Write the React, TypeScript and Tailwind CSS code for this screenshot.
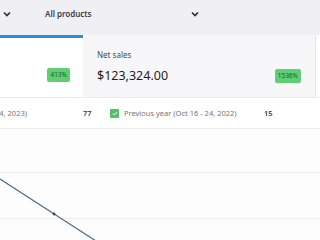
import React from 'react';

const Chevron: React.FC<{ className?: string }> = ({ className }) => (
  <svg className={className} width="8" height="6" viewBox="0 0 8 6" fill="none">
    <path d="M1 1.5l3 3 3-3" stroke="#2c2c33" strokeWidth="1.6" />
  </svg>
);

const Badge: React.FC<{ value: string }> = ({ value }) => (
  <span className="inline-flex h-[14px] items-center rounded-[2px] bg-[#5ecf73] px-[3px] text-[6.5px] leading-none text-[#1e5a2a]">
    {value}
  </span>
);

export default function App() {
  return (
    <div className="h-[240px] w-[320px] overflow-hidden bg-[#fdfdfd] font-['Noto_Sans',sans-serif] text-[#1e1e1e]">
      {/* filter bar */}
      <div className="flex h-[35px] items-start bg-[#f0eff3] pt-[8px]">
        <Chevron className="ml-[3px] mt-[3px]" />
        <span className="ml-[34px] text-[8px] leading-[11px] font-semibold text-[#3c3c44]">All products</span>
        <Chevron className="ml-[99px] mt-[3px]" />
      </div>

      {/* summary tiles */}
      <div className="flex h-[63px] border-b border-[#ececee]">
        <div className="relative flex w-[83px] flex-col items-end border-t-[3px] border-[#2c8fcf] bg-white pr-[13px] pt-[30px]">
          <Badge value="413%" />
        </div>
        <div className="flex w-[233px] flex-col border-r border-[#e4e4e7] bg-[#f7f7fa] pl-[14px] pr-[14px] pt-[15px]">
          <span className="text-[8px] leading-[10px] text-[#4a4a4a]">Net sales</span>
          <div className="mt-[8px] flex items-center justify-between">
            <span className="text-[12.5px] leading-[16px] text-[#1e1e1e]">$123,324.00</span>
            <Badge value="1536%" />
          </div>
        </div>
        <div className="flex-1 bg-white" />
      </div>

      {/* legend row */}
      <div className="flex h-[31px] items-center overflow-hidden whitespace-nowrap border-b border-[#ececee] bg-white pt-[1px] text-[7.5px] text-[#757575]">
        <div className="flex w-[83px] shrink-0 justify-end pr-[56px]">
          <span>Current period (Oct 16 - 24, 2023)</span>
        </div>
        <span className="w-[27px] shrink-0 font-semibold text-[#3c3c3c]">77</span>
        <span className="flex h-[9px] w-[9px] shrink-0 items-center justify-center rounded-[1px] bg-[#4fc16a]">
          <svg width="6" height="5" viewBox="0 0 6 5" fill="none">
            <path d="M0.8 2.5l1.5 1.5L5.2 0.9" stroke="white" strokeWidth="1" />
          </svg>
        </span>
        <span className="ml-[5px] w-[140px] shrink-0">Previous year (Oct 16 - 24, 2022)</span>
        <span className="font-semibold text-[#3c3c3c]">15</span>
      </div>

      {/* chart */}
      <div className="relative h-[111px] bg-[#fdfdfd]">
        <div className="h-[44px] border-b border-[#efeff1]" />
        <div className="h-[46px] border-b border-[#efeff1]" />
        <svg className="absolute left-0 top-0" width="320" height="111" viewBox="0 0 320 111">
          <line x1="0" y1="50" x2="96" y2="112" stroke="#4d6a86" strokeWidth="1.2" />
          <circle cx="54" cy="85" r="1.4" fill="#2f4660" />
        </svg>
      </div>
    </div>
  );
}
